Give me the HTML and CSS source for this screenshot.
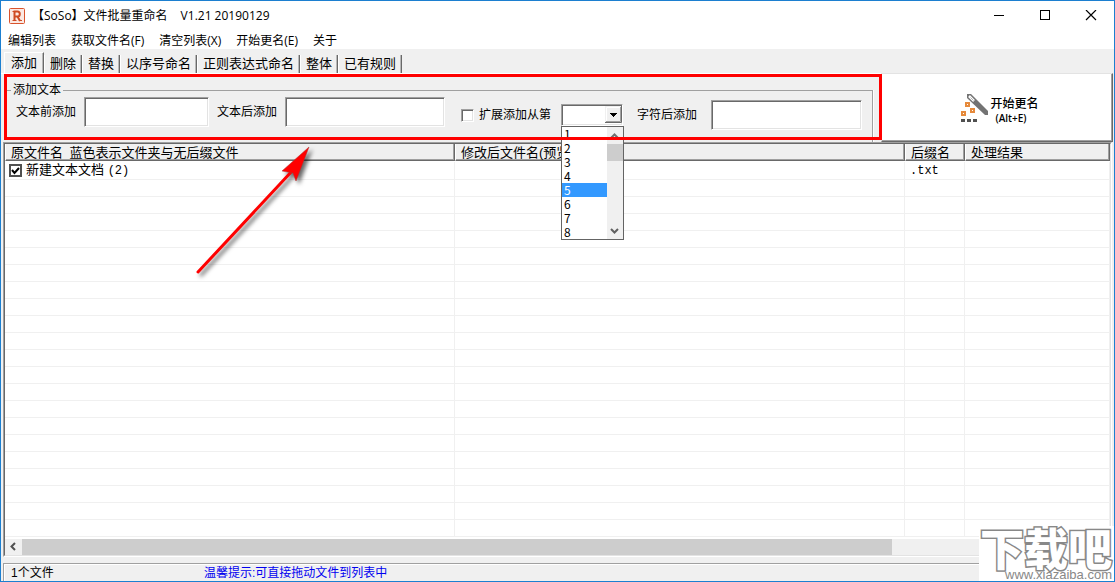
FILE: index.html
```html
<!DOCTYPE html>
<html lang="zh-CN">
<head>
<meta charset="utf-8">
<title>【SoSo】文件批量重命名</title>
<link rel="stylesheet" href="styles.css">
</head>
<body>
<div class="window">
  <header class="titlebar">
    <svg class="app-icon" width="16" height="16" viewBox="0 0 16 16" aria-hidden="true">
      <rect x="0.5" y="0.5" width="15" height="15" rx="1" fill="#fbe9e3" stroke="#d9532c"/>
      <path d="M5.500 13V3.500h3a2.300 2.500 0 0 1 0 5H6M8.500 8.500L11 13" fill="none" stroke="#cf4a22" stroke-width="2"/>
      <path d="M3.500 12.500h4M3.500 3.500h3M10 12.500h3" stroke="#cf4a22" stroke-width="1"/>
    </svg>
    <h1 class="title">【SoSo】文件批量重命名<span class="version">V1.21 20190129</span></h1>
    <div class="controls">
      <button class="control" aria-label="最小化"><svg width="12" height="12" viewBox="0 0 12 12"><path d="M1 5.500h10" stroke="#000"/></svg></button>
      <button class="control" aria-label="最大化"><svg width="12" height="12" viewBox="0 0 12 12"><rect x="1.500" y="0.500" width="9" height="9" fill="none" stroke="#000"/></svg></button>
      <button class="control" aria-label="关闭"><svg width="12" height="12" viewBox="0 0 12 12"><path d="M1 0l10 10M11 0L1 10" stroke="#000" stroke-width="1.200"/></svg></button>
    </div>
  </header>
  <nav class="menubar">
    <button class="menu">编辑列表</button>
    <button class="menu">获取文件名(F)</button>
    <button class="menu">清空列表(X)</button>
    <button class="menu">开始更名(E)</button>
    <button class="menu">关于</button>
  </nav>
  <div class="tabs" role="tablist">
    <button class="tab active" role="tab" aria-selected="true">添加</button>
    <button class="tab" role="tab">删除</button>
    <button class="tab" role="tab">替换</button>
    <button class="tab" role="tab">以序号命名</button>
    <button class="tab" role="tab">正则表达式命名</button>
    <button class="tab" role="tab">整体</button>
    <button class="tab" role="tab">已有规则</button>
  </div>
  <section class="tools">
    <div class="panel">
      <fieldset class="group">
        <legend class="legend">添加文本</legend>
        <div class="fields">
          <div class="field-set basic">
            <label for="before">文本前添加</label>
            <input class="text-box short" id="before" type="text">
            <label for="after">文本后添加</label>
            <input class="text-box" id="after" type="text">
          </div>
          <div class="field-set extended">
            <input class="tick" id="extend" type="checkbox">
            <label class="tick-label" for="extend">扩展添加从第</label>
            <div class="combo">
              <select class="combo-box" aria-label="字符位置"><option></option></select>
              <svg class="combo-arrow" width="17" height="17" viewBox="0 0 17 17" aria-hidden="true">
                <path d="M0 0h17v17H0z" fill="#f0f0f0"/>
                <path d="M16.500 0v16.500H0" fill="none" stroke="#696969"/>
                <path d="M15.500 1v14.500H1" fill="none" stroke="#a0a0a0"/>
                <path d="M1.500 15V1.500H15" fill="none" stroke="#fff"/>
                <path d="M5 7h7v1h-1v1h-1v1H9v1H8v-1H7V9H6V8H5z"/>
              </svg>
              <div class="drop">
                <ul class="options" role="listbox" aria-label="字符位置列表">
                  <li role="option">1</li><li role="option">2</li><li role="option">3</li><li role="option">4</li>
                  <li class="chosen" role="option" aria-selected="true">5</li><li role="option">6</li><li role="option">7</li><li role="option">8</li>
                </ul>
                <div class="v-scroll">
                  <svg width="16" height="17" viewBox="0 0 16 17"><path d="M4 11l3.500-3.500L11 11" fill="none" stroke="#707070" stroke-width="2"/></svg>
                  <div class="v-thumb"></div>
                  <svg width="16" height="17" viewBox="0 0 16 17"><path d="M4 7l3.500 3.500L11 7" fill="none" stroke="#606060" stroke-width="2"/></svg>
                </div>
              </div>
            </div>
            <label class="position-label" for="insert">字符后添加</label>
            <input class="text-box insert-box" id="insert" type="text">
          </div>
        </div>
      </fieldset>
      <div class="highlight"></div>
    </div>
    <button class="start">
      <svg width="32" height="30" viewBox="0 0 32 30" aria-hidden="true">
        <path d="M10 1h4l17 17v4h-3L10 5z" fill="#737373"/>
        <path d="M12 3l5 5" stroke="#fff" stroke-width="2.500"/>
        <path d="M13.500 4.500l3 3" stroke="#b5b5b5" stroke-width="1"/>
        <g fill="#fff" stroke="#e68a3c" stroke-width="2"><path d="M9 10h3v3H9zM14 16h3v3h-3zM5 19h3v3H5z"/></g>
        <path d="M4 26h4v3H4zM10 26h4v3h-4zM16 26h4v3h-4z" fill="#505050"/>
      </svg>
      <span class="start-text">开始更名<small class="shortcut">(Alt+E)</small></span>
    </button>
  </section>
  <main class="list">
    <div class="table-view">
      <table class="files">
        <colgroup><col class="col-name"><col class="col-name"><col class="col-ext"><col></colgroup>
        <thead>
          <tr>
            <th><div class="head">原文件名&ensp;蓝色表示文件夹与无后缀文件</div></th>
            <th><div class="head">修改后文件名(预览)</div></th>
            <th><div class="head">后缀名</div></th>
            <th><div class="head">处理结果</div></th>
          </tr>
        </thead>
        <tbody>
          <tr>
            <td>
              <div class="file">
                <span class="check"><input class="row-tick" id="file1" type="checkbox" checked><svg class="mark" width="13" height="13" viewBox="0 0 13 13" aria-hidden="true"><path d="M3 6l2.500 3L10 4" fill="none" stroke="#000" stroke-width="2"/></svg></span>
                <label for="file1">新建文本文档 <span class="mono">(2)</span></label>
              </div>
            </td>
            <td></td><td><span class="mono ext">.txt</span></td><td></td>
          </tr>
          <tr><td></td><td></td><td></td><td></td></tr>
          <tr><td></td><td></td><td></td><td></td></tr>
          <tr><td></td><td></td><td></td><td></td></tr>
          <tr><td></td><td></td><td></td><td></td></tr>
          <tr><td></td><td></td><td></td><td></td></tr>
          <tr><td></td><td></td><td></td><td></td></tr>
          <tr><td></td><td></td><td></td><td></td></tr>
          <tr><td></td><td></td><td></td><td></td></tr>
          <tr><td></td><td></td><td></td><td></td></tr>
          <tr><td></td><td></td><td></td><td></td></tr>
          <tr><td></td><td></td><td></td><td></td></tr>
          <tr><td></td><td></td><td></td><td></td></tr>
          <tr><td></td><td></td><td></td><td></td></tr>
          <tr><td></td><td></td><td></td><td></td></tr>
          <tr><td></td><td></td><td></td><td></td></tr>
          <tr><td></td><td></td><td></td><td></td></tr>
          <tr><td></td><td></td><td></td><td></td></tr>
          <tr><td></td><td></td><td></td><td></td></tr>
          <tr><td></td><td></td><td></td><td></td></tr>
          <tr><td></td><td></td><td></td><td></td></tr>
          <tr><td></td><td></td><td></td><td></td></tr>
        </tbody>
      </table>
    </div>
    <div class="h-scroll">
      <svg width="17" height="16" viewBox="0 0 17 16" aria-hidden="true"><path d="M10 4L6.500 7.500 10 11" fill="none" stroke="#505050" stroke-width="2"/></svg>
      <div class="h-thumb"></div>
    </div>
  </main>
  <footer class="status">
    <span class="count">1个文件</span>
    <span class="hint">温馨提示:可直接拖动文件到列表中</span>
  </footer>
  <svg class="pointer" width="140" height="145" viewBox="0 0 140 145" aria-hidden="true">
    <path d="M13 133L108 31" stroke="#f00" stroke-width="3" stroke-linecap="round"/>
    <path d="M124 8L111 42 108 34 97 32z" fill="#f00" stroke="#a33" stroke-width="0.500"/>
  </svg>
  <aside class="watermark">
    <span class="mark-name">下载吧</span>
    <span class="mark-site">www.xiazaiba.com</span>
  </aside>
</div>
</body>
</html>
```
FILE: styles.css
```css
* { box-sizing: border-box; }

body {
  margin: 0;
  background: #fff;
  color: #000;
  font: 12px/16px "Liberation Sans", "Noto Sans CJK SC", sans-serif;
}

button, input, select { font: inherit; color: inherit; border-radius: 0; margin: 0; }
button { border: 0; padding: 0; background: none; white-space: nowrap; }

.window {
  position: relative;
  display: flex;
  flex-direction: column;
  height: 100vh;
  overflow: hidden;
  border: 1px solid #1c7fd0;
  background: #f0f0f0;
}

/* Title and menus */
.titlebar {
  display: flex;
  align-items: center;
  height: 30px;
  padding-left: 8px;
  background: #fff;
  flex: none;
}
.title {
  flex: 1;
  margin: 0 0 0 7px;
  font: 12px/16px "Open Sans", "Noto Sans CJK SC", sans-serif;
  white-space: nowrap;
}
.version { margin-left: 13px; }
.controls { display: flex; }
.control { display: flex; align-items: center; justify-content: center; width: 46px; height: 28px; }

.menubar { display: flex; flex: none; gap: 15px; height: 18px; padding-left: 7px; background: #fff; }
.menu { font: 12px/20px "Open Sans", "Noto Sans CJK SC", sans-serif; }

/* Tabs */
.tabs { display: flex; flex: none; align-items: flex-end; height: 24px; padding-left: 3px; }
.tab {
  height: 18px;
  padding: 0 5px;
  font-size: 13px;
  line-height: 18px;
  border-left: 1px solid #fff;
  border-right: 1px solid #696969;
  box-shadow: inset -1px 0 #b8b8b8;
}
.tab.active { height: 21px; padding: 0 6px; border-top: 1px solid #fff; }

/* Tool panel */
.tools { display: flex; flex: none; height: 69px; }
.panel { position: relative; flex: 1; min-width: 0; padding: 9px 8px 0 5px; border-top: 1px solid #fff; }
.group {
  min-width: 0;
  height: 59px;
  margin: 0;
  padding: 0;
  border: 1px solid #a0a0a0;
  border-left-color: #f0f0f0;
  border-bottom: 0;
  box-shadow: 1px 0 #fff;
}
.legend { margin-left: 4px; padding: 0 2px; line-height: 14px; }
.fields { display: flex; gap: 16px; padding: 0 10px 0 9px; }
.field-set { display: flex; align-items: center; white-space: nowrap; height: 30px; min-width: 0; }
.basic { flex: 429 1 0; gap: 8px; }
.extended { flex: 401 1 0; margin-top: 3px; }
.text-box {
  flex: 163 1 0;
  min-width: 0;
  height: 30px;
  padding: 2px 4px;
  background: #fff;
  border: 1px solid;
  border-color: #a0a0a0 #fff #fff #a0a0a0;
  box-shadow: inset 1px 1px #696969, inset -1px -1px #e3e3e3;
}
.short { flex-grow: 125; }
.tick, .row-tick { appearance: none; width: 13px; height: 13px; background: #fff; flex: none; }
.tick {
  border: 1px solid;
  border-color: #a0a0a0 #fff #fff #a0a0a0;
  box-shadow: inset 1px 1px #696969, inset -1px -1px #e3e3e3;
}
.tick-label { margin: 0 10px 0 5px; }
.position-label { margin: 0 14px; }
.combo { position: relative; width: 62px; height: 22px; flex: none; }
.combo-box {
  appearance: none;
  width: 100%;
  height: 100%;
  padding: 0 20px 0 4px;
  background: #fff;
  border: 1px solid;
  border-color: #a0a0a0 #fff #fff #a0a0a0;
  box-shadow: inset 1px 1px #696969, inset -1px -1px #e3e3e3;
}
.combo-arrow { position: absolute; right: 1px; top: 2px; pointer-events: none; }
.drop {
  position: absolute;
  z-index: 2;
  top: 100%;
  left: 0;
  display: flex;
  width: 63px;
  border: 1px solid #646464;
  background: #fff;
}
.options { flex: 1; margin: 0; padding: 0; list-style: none; font-family: "Noto Sans CJK SC", sans-serif; line-height: 14px; }
.options li { padding-left: 2px; }
.options .chosen { background: #3399ff; color: #fff; }
.v-scroll { display: flex; flex-direction: column; width: 16px; background: #f0f0f0; }
.v-thumb { height: 17px; margin-bottom: auto; background: #cdcdcd; }
.highlight { position: absolute; z-index: 3; inset: 0 -1px 2px 3px; border: 3px solid #f00; pointer-events: none; }

.start {
  display: flex;
  align-items: center;
  justify-content: center;
  gap: 1px;
  width: 232px;
  margin-right: 1px;
  padding-left: 2px;
  background: #fff;
  border: 1px solid;
  border-color: #e3e3e3 #696969 #696969 #e3e3e3;
  box-shadow: inset -1px -1px #a0a0a0;
}
.start-text { display: flex; flex-direction: column; padding-top: 6px; text-align: left; line-height: 15px; font-family: "Open Sans", "Noto Sans CJK SC", sans-serif; font-weight: 500; }
.shortcut { padding-left: 5px; font: 10px/15px "Open Sans", sans-serif; font-weight: 600; }

/* File list */
.list {
  display: flex;
  flex-direction: column;
  flex: 1;
  min-height: 0;
  margin: 0 2px;
  border: 1px solid;
  border-color: #a0a0a0 #fff #fff #a0a0a0;
}
.table-view { flex: 1; min-height: 0; overflow: hidden; background: #fff; border: 1px solid #696969; border-right-color: #e3e3e3; border-bottom: 0; }
.files { width: 100%; table-layout: fixed; border-collapse: separate; border-spacing: 0; font-size: 13px; }
.col-name { width: 450px; }
.col-ext { width: 60px; }
.files th { height: 18px; padding: 0 0 1px; font-weight: 400; text-align: left; }
.head {
  height: 17px;
  padding-left: 5px;
  overflow: hidden;
  background: #f0f0f0;
  line-height: 18px;
  white-space: nowrap;
  border: 1px solid;
  border-color: #fff #696969 #696969 #fff;
  border-top: 0;
  box-shadow: inset -1px -1px #a0a0a0;
}
.files td { height: 17px; padding: 0; line-height: 16px; border-right: 1px solid #f0f0f0; border-bottom: 1px solid #f0f0f0; }
.file { display: flex; align-items: center; gap: 4px; height: 16px; padding-left: 4px; }
.check { position: relative; display: flex; }
.row-tick { border: 2px solid #505050; }
.mark { position: absolute; inset: 0; pointer-events: none; }
.mono { font-family: "Liberation Mono", monospace; font-size: 12px; }
.ext { padding-left: 5px; }

.h-scroll { display: flex; flex: none; height: 17px; background: #f0f0f0; border-left: 1px solid #696969; border-bottom: 1px solid #e3e3e3; }
.h-thumb { width: 80%; background: #cdcdcd; max-width: 870px; }

/* Status bar */
.status {
  display: flex;
  flex: none;
  align-items: flex-end;
  height: 18px;
  margin: 6px 0 0 2px;
  padding-left: 7px;
  border-top: 1px solid #a0a0a0;
  border-left: 1px solid #a0a0a0;
  box-shadow: inset 1px 1px #fff;
}
.count { width: 193px; }
.hint { color: #0000f0; }

/* Overlays */
.pointer { position: absolute; z-index: 4; left: 184px; top: 138px; pointer-events: none; filter: drop-shadow(3px 3px 2px #0009); }

.watermark {
  position: absolute;
  z-index: 5;
  right: -1px;
  bottom: -1px;
  display: flex;
  flex-direction: column;
  width: 136px;
  height: 56px;
  padding-right: 3px;
  background: #fff;
  text-align: right;
}
.mark-name {
  color: #fff;
  font: 900 44px/42px "Noto Sans CJK SC", sans-serif;
  -webkit-text-stroke: 3px #888;
  paint-order: stroke;
}
.mark-site { color: #888; font-size: 13px; line-height: 14px; }
```
